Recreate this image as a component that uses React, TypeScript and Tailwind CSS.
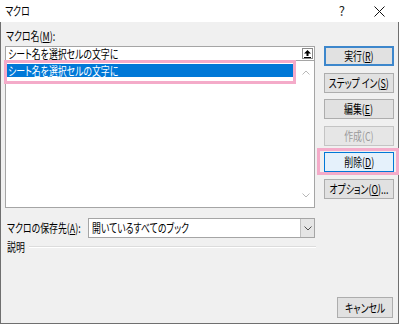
import React from 'react';

const font = "font-['Noto_Sans_CJK_JP','Noto_Sans',sans-serif] [font-feature-settings:'palt']";

// Meiryo UI is much narrower than Noto Sans CJK, so squeeze text horizontally
function T({ children, center, className = '' }: { children: React.ReactNode; center?: boolean; className?: string }) {
  return (
    <span
      className={`inline-block whitespace-nowrap scale-x-[0.74] ${center ? 'origin-center' : 'origin-left'} ${className}`}
    >
      {children}
    </span>
  );
}

function Btn({
  children,
  variant = 'normal',
  className = '',
}: {
  children: React.ReactNode;
  variant?: 'normal' | 'default' | 'disabled' | 'hover';
  className?: string;
}) {
  const styles = {
    normal: 'bg-[#e1e1e1] border border-[#adadad] text-black',
    default: 'bg-[#e1e1e1] border-2 border-[#3d87cc] text-black',
    disabled: 'bg-[#e6e6e6] border border-[#c4c4c4] text-[#9a9a9a]',
    hover: 'bg-[#e5f1fb] border border-[#0078d7] text-black',
  }[variant];
  return (
    <div className={`relative h-[20px] flex items-center justify-center leading-none ${styles} ${className}`}>
      <T center>{children}</T>
    </div>
  );
}

const U = ({ children }: { children: React.ReactNode }) => <span className="underline underline-offset-[1px]">{children}</span>;

function Chevron({ up }: { up?: boolean }) {
  return (
    <svg width="8" height="5" viewBox="0 0 8 5" className="block">
      <path d={up ? 'M0.5 4.5 L4 1 L7.5 4.5' : 'M0.5 0.5 L4 4 L7.5 0.5'} fill="none" stroke="#b8b8b8" strokeWidth="1" />
    </svg>
  );
}

const Pink = ({ className }: { className: string }) => <div className={`absolute border-[3px] border-[#f4abc9] ${className}`} />;

export default function App() {
  return (
    <div className={`w-[400px] h-[325px] bg-white text-[12px] ${font}`}>
      <div className="w-[399px] h-[324px] flex flex-col">
        {/* title bar */}
        <div className="h-[22px] bg-white flex items-center text-black">
          <T className="pl-[7px]">マクロ</T>
          <span className="ml-auto mr-[29px] text-[13px] text-[#222]">?</span>
          <svg width="11" height="11" viewBox="0 0 11 11" className="mr-[14px]">
            <path d="M0.5 0.5 L10.5 10.5 M10.5 0.5 L0.5 10.5" stroke="#111" strokeWidth="1" />
          </svg>
        </div>

        {/* body */}
        <div className="flex-1 bg-[#f0f0f0] border-l border-r border-b border-[#6f6f6f] flex flex-col pl-[4px] text-black">
          <div className="h-[17px] mt-[5px] leading-[17px] pl-[1px]">
            <T>
              マクロ名(<U>M</U>):
            </T>
          </div>

          <div className="flex mt-[2px]">
            {/* left column */}
            <div className="w-[310px] flex flex-col">
              <div className="h-[14px] bg-white border-l border-r border-t border-[#a5a5a5] flex items-center pl-[2px] pr-[1px]">
                <T className="leading-none">シート名を選択セルの文字に</T>
                <div className="ml-auto w-[11px] h-[11px] border border-[#8a8a8a] bg-white flex items-center justify-center">
                  <svg width="7" height="8" viewBox="0 0 7 8">
                    <path d="M3.5 0 L7 3.5 L4.5 3.5 L4.5 6 L2.5 6 L2.5 3.5 L0 3.5 Z" fill="#000" />
                    <rect x="0" y="7" width="7" height="1" fill="#000" />
                  </svg>
                </div>
              </div>
              <div className="relative h-[148px] bg-white border border-[#a5a5a5] flex">
                <div className="flex-1 pt-[3px] pl-[1px]">
                  <div className="h-[13px] bg-[#0078d7] text-white leading-[13px] pl-[1px] mr-[5px]">
                    <T>シート名を選択セルの文字に</T>
                  </div>
                </div>
                <div className="w-[16px] flex flex-col items-center justify-between py-[9px]">
                  <Chevron up />
                  <Chevron />
                </div>
                <Pink className="-left-[2px] -top-[1px] w-[292px] h-[24px]" />
              </div>
            </div>

            {/* right column */}
            <div className="w-[70px] ml-[9px] flex flex-col gap-[6.5px]">
              <Btn variant="default">
                実行(<U>R</U>)
              </Btn>
              <Btn>
                ステップ イン(<U>S</U>)
              </Btn>
              <Btn>
                編集(<U>E</U>)
              </Btn>
              <Btn variant="disabled">作成(C)</Btn>
              <div className="relative">
                <Btn variant="hover">
                  削除(<U>D</U>)
                </Btn>
                <Pink className="-left-[7px] -right-[5px] -top-[4px] -bottom-[3px]" />
              </div>
              <Btn>
                オプション(<U>O</U>)...
              </Btn>
            </div>
          </div>

          {/* location row */}
          <div className="flex items-center mt-[10px] h-[20px]">
            <div className="w-[83px] pl-[2px]">
              <T>
                マクロの保存先(<U>A</U>):
              </T>
            </div>
            <div className="w-[227px] h-[20px] bg-white border border-[#a5a5a5] flex items-center pl-[3px]">
              <T>開いているすべてのブック</T>
              <div className="ml-auto w-[14px] h-[18px] bg-[#e5e5e5] border-l border-[#c0c0c0] flex items-center justify-center">
                <svg width="8" height="5" viewBox="0 0 8 5">
                  <path d="M0.5 0.5 L4 4 L7.5 0.5" fill="none" stroke="#505050" strokeWidth="1" />
                </svg>
              </div>
            </div>
          </div>

          {/* description */}
          <div className="flex items-center mt-[2px] h-[14px]">
            <div className="w-[24px] pl-[2px] leading-none">
              <T>説明</T>
            </div>
            <div className="w-[287px] border-t border-[#dcdcdc] border-b border-b-white" />
          </div>

          <div className="flex-1" />
          <div className="flex justify-end pr-[5px] pb-[5px]">
            <Btn className="w-[56px] h-[21px]">キャンセル</Btn>
          </div>
        </div>
      </div>
    </div>
  );
}
